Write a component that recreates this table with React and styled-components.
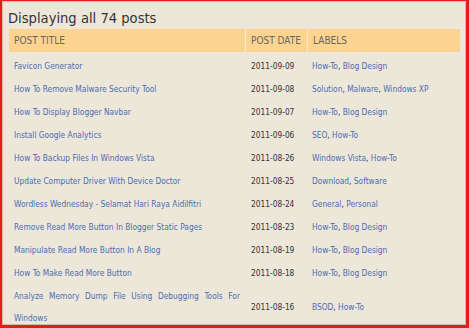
import styled, { createGlobalStyle } from "styled-components";

const posts = [
  { title: "Favicon Generator", date: "2011-09-09", labels: ["How-To", "Blog Design"] },
  { title: "How To Remove Malware Security Tool", date: "2011-09-08", labels: ["Solution", "Malware", "Windows XP"] },
  { title: "How To Display Blogger Navbar", date: "2011-09-07", labels: ["How-To", "Blog Design"] },
  { title: "Install Google Analytics", date: "2011-09-06", labels: ["SEO", "How-To"] },
  { title: "How To Backup Files In Windows Vista", date: "2011-08-26", labels: ["Windows Vista", "How-To"] },
  { title: "Update Computer Driver With Device Doctor", date: "2011-08-25", labels: ["Download", "Software"] },
  { title: "Wordless Wednesday - Selamat Hari Raya Aidilfitri", date: "2011-08-24", labels: ["General", "Personal"] },
  { title: "Remove Read More Button In Blogger Static Pages", date: "2011-08-23", labels: ["How-To", "Blog Design"] },
  { title: "Manipulate Read More Button In A Blog", date: "2011-08-19", labels: ["How-To", "Blog Design"] },
  { title: "How To Make Read More Button", date: "2011-08-18", labels: ["How-To", "Blog Design"] },
  { title: "Analyze Memory Dump File Using Debugging Tools For Windows", date: "2011-08-16", labels: ["BSOD", "How-To"] },
];

const GlobalStyle = createGlobalStyle`
  html, body {
    margin: 0;
    padding: 0;
    background: #ede7da;
  }
`;

const PostList = () => {
  return (
    <StyledFrame>
      <GlobalStyle />
      <h2>Displaying all 74 posts</h2>
      <table>
        <thead>
          <tr>
            <th className='title'>POST TITLE</th>
            <th className='date'>POST DATE</th>
            <th className='labels'>LABELS</th>
          </tr>
        </thead>
        <tbody>
          {posts.map((post) => (
            <tr key={post.title}>
              <td className='title'>
                <a href='#'>{post.title}</a>
              </td>
              <td className='date'>{post.date}</td>
              <td className='labels'>
                {post.labels.map((label, i) => (
                  <span key={label}>
                    <a href='#'>{label}</a>
                    {i < post.labels.length - 1 ? ", " : ""}
                  </span>
                ))}
              </td>
            </tr>
          ))}
        </tbody>
      </table>
    </StyledFrame>
  );
};

const StyledFrame = styled.div`
  box-sizing: border-box;
  width: 469px;
  height: 328px;
  overflow: hidden;
  border-style: solid;
  border-color: #e41c1c;
  border-width: 1px 3px 3px 2px;
  box-shadow: inset 0 0 0 1px rgba(120, 60, 40, 0.25);
  background: #ede7da;
  font-family: "DejaVu Sans Condensed", "DejaVu Sans", sans-serif;
  color: #333;

  h2 {
    margin: 8px 0 2px 6px;
    font-size: 14.6px;
    line-height: 18px;
    font-weight: normal;
    color: #333;
  }

  table {
    margin-left: 7px;
    width: 451px;
    border-collapse: separate;
    border-spacing: 0;
    table-layout: fixed;
  }

  th {
    height: 23px;
    padding: 0 5px;
    background: #fdd390;
    border-bottom: 2px solid #ede7da;
    text-align: left;
    font-size: 10px;
    font-weight: normal;
    white-space: nowrap;
    color: #666;
  }

  th + th {
    border-left: 1px solid #fbe8c8;
  }

  .title {
    width: 226px;
  }

  .date {
    width: 51px;
  }

  td {
    padding: 0.5px 5px;
    line-height: 22px;
    font-size: 8.3px;
    vertical-align: middle;
  }

  td.title {
    text-align: justify;
  }

  td.date {
    color: #333;
    padding-left: 6px;
    padding-right: 4px;
  }

  a {
    color: #4a6db3;
    text-decoration: none;
  }
`;

export default PostList;
